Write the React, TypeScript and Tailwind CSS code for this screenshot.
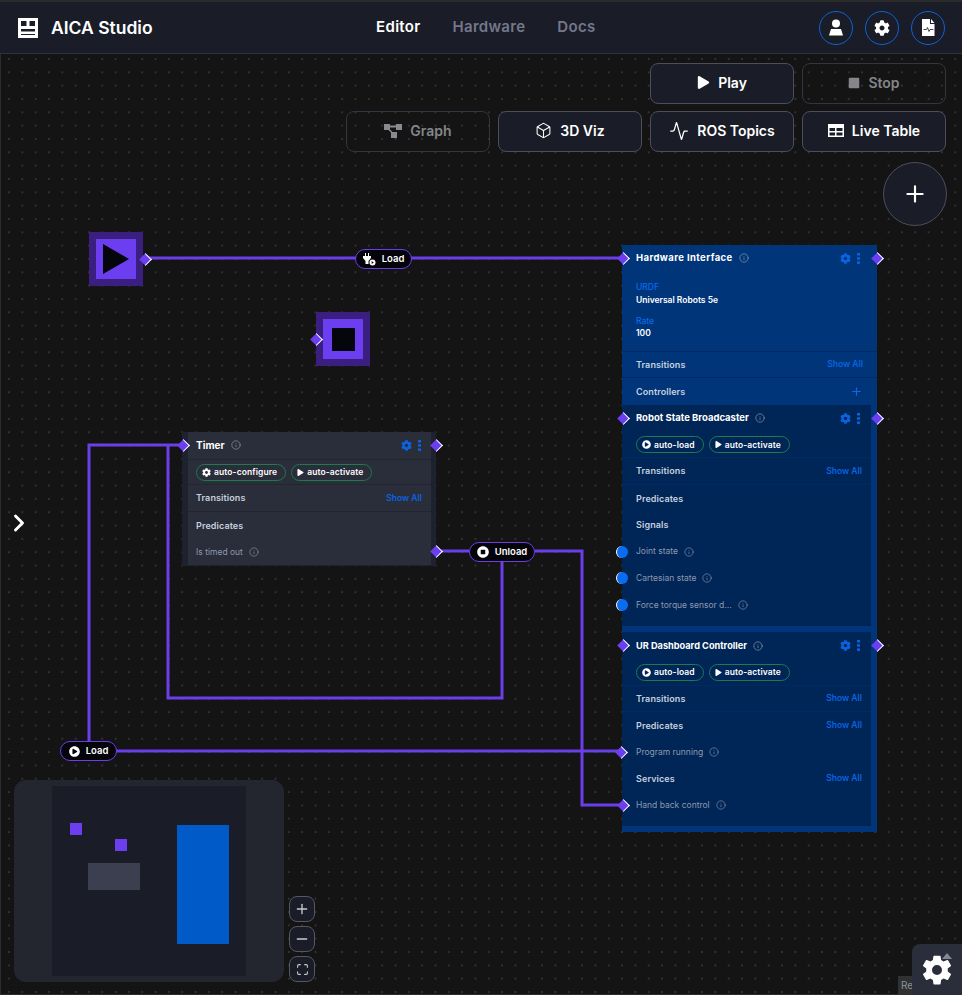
import { Activity, Box, ChevronRight, Info, Maximize, Minus, Plus } from 'lucide-react'
import { FaCog, FaPlay, FaPlayCircle, FaStop, FaStopCircle } from 'react-icons/fa'
import { IoSettingsSharp } from 'react-icons/io5'
import type { ReactNode } from 'react'

const Logo = () => (
  <svg width="20" height="20" viewBox="0 0 20 20" fill="#fff">
    <path d="M0 0h20v20H0z M3 3v5h5.500V3z M11.500 3v5H17V3z M3 11v2.500h14V11z M3 16v1h14v-1z" fillRule="evenodd" />
  </svg>
)

const PersonIcon = () => (
  <svg width="16" height="17" viewBox="0 0 16 17" fill="#fff">
    <circle cx="8" cy="4.500" r="4" />
    <path d="M3 10h10l2 6.500H1z" />
  </svg>
)

const FileIcon = () => (
  <svg width="13" height="17" viewBox="0 0 13 17" fill="#fff">
    <path d="M0 0h8v5h4.500v12H0z" />
    <path d="M9 0l3.500 4H9z" />
    <path d="M1.500 10.500h3l1-2 1.500 4 1-2h3.500" fill="none" stroke="#1a1d27" strokeWidth="0.8" />
  </svg>
)

const GraphIcon = () => (
  <svg width="18" height="14" viewBox="0 0 18 14" fill="#8a8a8e">
    <path d="M0 0h6v6H0z M12 0h6v6h-6z M6 1.500h6v2H6z M7 8h6v6H7z" />
    <path d="M5 5.500l3.500 3.500" stroke="#8a8a8e" strokeWidth="1.500" />
  </svg>
)

const TableIcon = () => (
  <svg width="16" height="13" viewBox="0 0 16 13" fill="#fff">
    <path fillRule="evenodd" d="M0 0h16v13H0z M1.500 4v3h5.500V4z M8.500 4v3h6V4z M1.500 8.500v3h5.500v-3z M8.500 8.500v3h6v-3z" />
  </svg>
)

const PlugIcon = () => (
  <svg width="13" height="13" viewBox="0 0 13 13" fill="#fff">
    <path d="M2 0h1v3H2z M5 0h1v3H5z M0 3h8v2L5.500 8v3h-3V8L0 5z" />
    <circle cx="9.500" cy="9.500" r="3" />
    <path d="M8.700 8l2 1.500-2 1.500z" fill="#000" />
  </svg>
)

const Kebab = () => (
  <svg width="3" height="11" viewBox="0 0 3 11" fill="#0a63e0">
    <rect y="0" width="3" height="2.500" />
    <rect y="4.200" width="3" height="2.500" />
    <rect y="8.400" width="3" height="2.500" />
  </svg>
)

const ToolButton = ({ icon, label, off }: { icon: ReactNode; label: string; off?: boolean }) => (
  <button
    className={
      off
        ? 'flex h-[41px] w-36 items-center justify-center gap-2 rounded-lg border border-[#33353f] pb-[2px] text-[14px] font-semibold text-[#85858a]'
        : 'flex h-[41px] w-36 items-center justify-center gap-2 rounded-lg border border-[#4c4e5a] bg-[#1a1d27] pb-[2px] text-[14px] font-semibold text-white'
    }
  >
    {icon}
    {label}
  </button>
)

const HeaderCircle = ({ children }: { children: ReactNode }) => (
  <div className="flex h-[34px] w-[34px] items-center justify-center rounded-full border border-[#0a63d8]">{children}</div>
)

const ZoomButton = ({ children }: { children: ReactNode }) => (
  <div className="flex h-[26px] w-[26px] items-center justify-center rounded-lg border border-[#555763] bg-[#1a1d27] text-[#c9cad0]">{children}</div>
)

const Port = ({ className }: { className: string }) => (
  <span className={`absolute top-1/2 z-20 -mt-[4.5px] h-[9px] w-[9px] rotate-45 border-t-[1.5px] border-r-[1.5px] border-white bg-[#6b3ff0] ${className}`} />
)

const Dot = ({ className }: { className: string }) => (
  <span className={`absolute top-1/2 z-20 -mt-[6px] h-3 w-3 rounded-full border-l-[1.5px] border-white bg-[#0a6cf0] ${className}`} />
)

const InfoMark = ({ color = '#9aa3b5' }: { color?: string }) => <Info size={10} color={color} strokeWidth={1.5} className="shrink-0" />

const NodeHead = ({ title, children, pad, titleClass }: { title: string; children?: ReactNode; pad: string; titleClass?: string }) => (
  <div className={`relative flex h-[26.67px] items-center justify-between ${pad}`}>
    <div className="flex items-center gap-[6px]">
      <span className={`whitespace-nowrap font-bold text-white ${titleClass ?? 'text-[9.500px]'}`}>{title}</span>
      <InfoMark />
    </div>
    <div className="flex items-center gap-[6px]">
      <FaCog size={11} color="#0a63e0" />
      <Kebab />
    </div>
    {children}
  </div>
)

const Chips = ({ chips, className }: { chips: { icon: ReactNode; label: string }[]; className: string }) => (
  <div className={`flex h-[26.67px] items-center gap-[5px] border-b pt-px ${className}`}>
    {chips.map((c) => (
      <span key={c.label} className="flex h-[17px] items-center gap-[3px] rounded-full border border-[#1f7a4d] pl-[5px] pr-[8px] text-[8.500px] font-semibold tracking-[0.1px] text-white">
        {c.icon}
        {c.label}
      </span>
    ))}
  </div>
)

const Row = ({ label, action, className, plus }: { label: string; action?: boolean; className: string; plus?: boolean }) => (
  <div className={`flex h-[26.67px] items-center justify-between ${className}`}>
    <span className="text-[9px] font-semibold tracking-[0.1px] text-[#c7d0de]">{label}</span>
    {action && <span className="text-[8.500px] font-semibold text-[#0a63e0]">Show All</span>}
    {plus && <Plus size={13} color="#0a6ae8" />}
  </div>
)

const Item = ({ label, children, className }: { label: string; children?: ReactNode; className: string }) => (
  <div className={`relative flex h-[26.67px] items-center gap-[6px] ${className}`}>
    <span className="text-[8.500px] text-[#8d99ad]">{label}</span>
    <InfoMark color="#8d99ad" />
    {children}
  </div>
)

const loadChip = { icon: <FaPlayCircle size={9} color="#fff" />, label: 'auto-load' }
const activateChip = { icon: <FaPlay size={7} color="#fff" />, label: 'auto-activate' }
const configureChip = { icon: <FaCog size={9} color="#fff" />, label: 'auto-configure' }

const Wires = () => (
  <svg className="absolute left-0 top-0 z-0" width="962" height="941" viewBox="0 54 962 941" fill="none" stroke="#6b3fe8" strokeWidth="3">
    <path d="M145 258H622" />
    <path d="M116 751H622" />
    <path d="M89 741V445H186" />
    <path d="M436 551H469" />
    <path d="M535 551H582V805H622" />
    <path d="M502 561V698H168V445" />
  </svg>
)

const Pill = ({ icon, label, className }: { icon: ReactNode; label: string; className: string }) => (
  <div className={`absolute z-10 flex items-center justify-center gap-[6px] rounded-full border-[1.5px] border-[#6b3fe8] bg-[#04040a] text-[9.500px] font-semibold text-white ${className}`}>
    {icon}
    {label}
  </div>
)

const Minimap = () => (
  <div className="absolute left-[14px] top-[726px] flex h-[202px] w-[270px] justify-center rounded-xl bg-[#23262f] py-[6px]">
    <div className="relative h-[190px] w-[194px] bg-[#1a1d27]">
      <div className="absolute left-[18px] top-[37px] h-3 w-3 bg-[#6b3ff0]" />
      <div className="absolute left-[63px] top-[53px] h-3 w-3 bg-[#6b3ff0]" />
      <div className="absolute left-[36px] top-[77px] h-[27px] w-[52px] bg-[#3c3f4f]" />
      <div className="absolute left-[125px] top-[39px] h-[119px] w-[52px] bg-[#005bc8]" />
    </div>
  </div>
)

export default function App() {
  return (
    <div className="relative flex h-[995px] w-[962px] flex-col overflow-hidden bg-[#141414] font-['Inter',sans-serif]">
      <div className="h-[2px] bg-[#2b2b2b]" />
      <header className="flex h-[52px] items-center justify-between border-b border-[#2e3140] bg-[#1a1d27] pl-[18px] pr-[17px]">
        <div className="flex items-center gap-[13px]">
          <Logo />
          <span className="pt-[2px] text-[17.500px] font-semibold text-white">AICA Studio</span>
        </div>
        <nav className="flex items-center gap-8 text-[15px] font-semibold tracking-[0.3px] text-[#75778c]">
          <span className="text-white">Editor</span>
          <span>Hardware</span>
          <span>Docs</span>
        </nav>
        <div className="flex items-center gap-3">
          <HeaderCircle><PersonIcon /></HeaderCircle>
          <HeaderCircle><FaCog size={16} color="#fff" /></HeaderCircle>
          <HeaderCircle><FileIcon /></HeaderCircle>
        </div>
      </header>

      <main className="relative flex-1 bg-[#141414] bg-[radial-gradient(circle,#484848_0.5px,transparent_0.9px)] bg-[size:13.33px_13.33px] bg-[position:2.33px_-1.67px] shadow-[inset_1px_-1px_0_#2b2b2b]">
        <Wires />

        <div className="absolute right-[16px] top-[9px] z-10 flex w-[600px] flex-col items-end">
          <div className="flex w-full justify-end gap-2">
            <ToolButton icon={<FaPlay size={13} color="#fff" />} label="Play" />
            <ToolButton off icon={<FaStop size={12} color="#85858a" />} label="Stop" />
          </div>
          <div className="mt-[7px] flex gap-2">
            <ToolButton off icon={<GraphIcon />} label="Graph" />
            <ToolButton icon={<Box size={17} color="#fff" strokeWidth={1.5} />} label="3D Viz" />
            <ToolButton icon={<Activity size={20} color="#fff" strokeWidth={1.5} />} label="ROS Topics" />
            <ToolButton icon={<TableIcon />} label="Live Table" />
          </div>
          <div className="-mr-px mt-[10px] flex h-16 w-16 items-center justify-center rounded-full border border-[#4c4e5a] bg-[#1a1d27]">
            <Plus size={26} color="#fff" strokeWidth={2} />
          </div>
        </div>

        {/* start and stop blocks */}
        <div className="absolute left-[89px] top-[178px] flex h-[54px] w-[54px] items-center justify-center bg-[#3a1f80]">
          <div className="flex h-10 w-10 items-center justify-center bg-[#6b3ff0]">
            <svg width="26" height="30" viewBox="0 0 26 30" fill="#05050c"><path d="M0 0l26 15L0 30z" /></svg>
          </div>
          <Port className="-right-[7px]" />
        </div>
        <div className="absolute left-[316px] top-[258px] flex h-[54px] w-[54px] items-center justify-center bg-[#3a1f80]">
          <div className="flex h-10 w-10 items-center justify-center bg-[#6b3ff0]">
            <div className="h-[23px] w-[23px] bg-[#05050c]" />
          </div>
          <Port className="-left-[4px]" />
        </div>

        <Pill className="left-[355px] top-[195px] h-[20px] w-[57px]" icon={<PlugIcon />} label="Load" />
        <Pill className="left-[469px] top-[488px] h-[20px] w-[66px]" icon={<FaStopCircle size={12} color="#fff" />} label="Unload" />
        <Pill className="left-[60px] top-[687px] h-[20px] w-[57px]" icon={<FaPlayCircle size={11} color="#fff" />} label="Load" />

        {/* timer */}
        <div className="absolute left-[182px] top-[378px] z-10 w-[254px] bg-[#1e2130] pb-px pl-[6px] pr-[5px]">
          <div className="bg-[#2a2d3a]">
            <NodeHead title="Timer" pad="pl-[8px] pr-[10px]" titleClass="text-[10px]">
              <Port className="-left-[9px]" />
              <Port className="-right-[10px]" />
            </NodeHead>
            <Chips className="border-t border-[#23252f] pl-[8px]" chips={[configureChip, activateChip]} />
            <Row label="Transitions" action className="border-b border-[#23252f] pl-[8px] pr-[9px]" />
            <Row label="Predicates" className="pl-[8px]" />
            <Item label="Is timed out" className="pl-[8px]">
              <Port className="-right-[10px]" />
            </Item>
          </div>
        </div>

        {/* hardware interface */}
        <div className="absolute left-[622px] top-[191px] z-10 w-[255px] bg-[#00357a] pb-[6px]">
          <NodeHead title="Hardware Interface" pad="pl-[14px] pr-[17px]" titleClass="text-[9.500px] tracking-[0.4px]">
            <Port className="-left-[3px]" />
            <Port className="-right-[5px]" />
          </NodeHead>
          <div className="flex h-[80px] flex-col border-b border-[#002a63] px-[14px] pt-[9px]">
            <span className="text-[8.500px] font-medium leading-[12px] text-[#0a6be8]">URDF</span>
            <span className="text-[8.500px] font-semibold leading-[14px] text-white">Universal Robots 5e</span>
            <span className="mt-[8px] text-[8.500px] font-medium leading-[12px] text-[#0a6be8]">Rate</span>
            <span className="text-[8.500px] font-semibold leading-[12px] text-white">100</span>
          </div>
          <Row label="Transitions" action className="border-b border-[#002a63] px-[14px]" />
          <Row label="Controllers" plus className="px-[14px]" />

          <div className="w-[249px] bg-[#002557] pb-[8px]">
            <NodeHead title="Robot State Broadcaster" pad="pl-[14px] pr-[11px]">
              <Port className="-left-[3px]" />
              <Port className="-right-[11px]" />
            </NodeHead>
            <Chips className="border-[#002a63] pl-[14px]" chips={[loadChip, activateChip]} />
            <Row label="Transitions" action className="border-b border-[#002a63] pl-[14px] pr-[9px]" />
            <Row label="Predicates" className="pl-[14px]" />
            <Row label="Signals" className="pl-[14px]" />
            <Item label="Joint state" className="pl-[14px]"><Dot className="-left-[6px]" /></Item>
            <Item label="Cartesian state" className="pl-[14px]"><Dot className="-left-[6px]" /></Item>
            <Item label="Force torque sensor d..." className="pl-[14px]"><Dot className="-left-[6px]" /></Item>
          </div>

          <div className="mt-[6px] w-[249px] bg-[#002557] pb-[7px]">
            <NodeHead title="UR Dashboard Controller" pad="pl-[14px] pr-[11px]" titleClass="text-[9.200px]">
              <Port className="-left-[3px]" />
              <Port className="-right-[11px]" />
            </NodeHead>
            <Chips className="border-[#002a63] pl-[14px]" chips={[loadChip, activateChip]} />
            <Row label="Transitions" action className="border-b border-[#002a63] pl-[14px] pr-[9px]" />
            <Row label="Predicates" action className="pl-[14px] pr-[9px]" />
            <Item label="Program running" className="pl-[14px]"><Port className="-left-[5px]" /></Item>
            <Row label="Services" action className="pl-[14px] pr-[9px]" />
            <Item label="Hand back control" className="pl-[14px]"><Port className="-left-[3px]" /></Item>
          </div>
        </div>

        <ChevronRight size={28} color="#fff" strokeWidth={2.5} className="absolute left-[5px] top-[455px]" />

        <Minimap />

        <div className="absolute left-[289px] top-[842px] flex flex-col gap-1">
          <ZoomButton><Plus size={16} /></ZoomButton>
          <ZoomButton><Minus size={16} /></ZoomButton>
          <ZoomButton><Maximize size={13} /></ZoomButton>
        </div>

        <div className="absolute bottom-0 left-[898px] flex h-[19px] w-[20px] items-center bg-[#2f3133] pl-[3px] text-[10px] text-[#8a949c]">Re</div>
        <div className="absolute bottom-0 right-0 flex h-[51px] w-[50px] items-center justify-center rounded-tl-lg bg-[#2a2d3a]">
          <IoSettingsSharp size={32} color="#fff" />
          <span className="absolute right-[10px] top-[9px] h-0 w-0 border-x-[5px] border-b-[6px] border-x-transparent border-b-[#85878f]" />
        </div>
      </main>
    </div>
  )
}
